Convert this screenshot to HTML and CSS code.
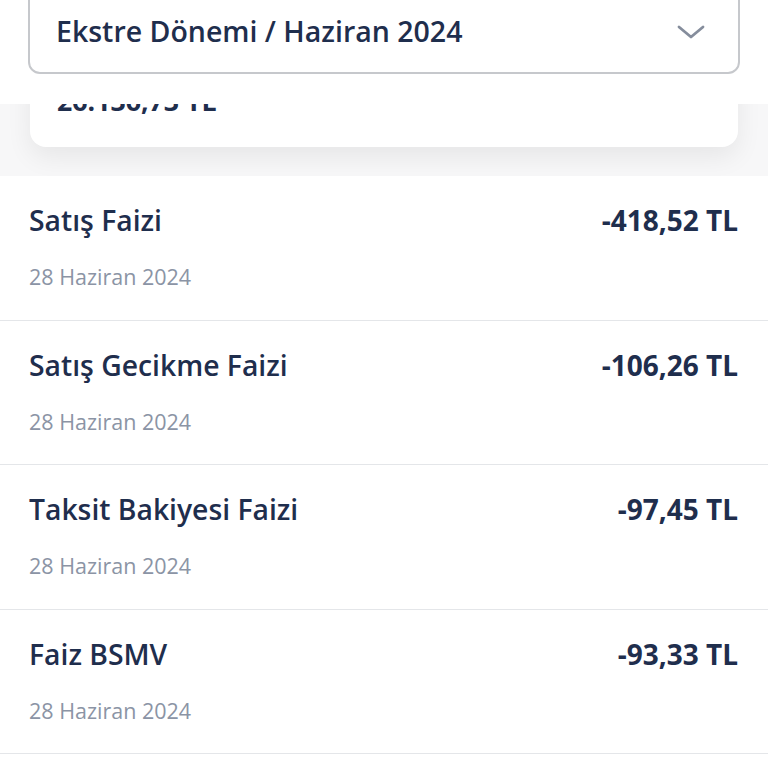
FILE: index.html
```html
<!DOCTYPE html>
<html lang="tr">
<head>
<meta charset="utf-8">
<title>Ekstre</title>
<link rel="stylesheet" href="styles.css">
</head>
<body>
<div class="page">
  <header class="header">
    <div class="select">
      <span class="select-label">Ekstre Dönemi / Haziran 2024</span>
      <svg class="chevron" width="28" height="14" viewBox="0 0 28 14" aria-hidden="true">
        <path d="M2 2 L14 12 L26 2" fill="none" stroke="#858d9c" stroke-width="2.8" stroke-linecap="round" stroke-linejoin="round"/>
      </svg>
    </div>
  </header>
  <section class="summary">
    <div class="summary-card">
      <div class="summary-amount">26.136,73 TL</div>
    </div>
  </section>
  <ul class="list">
    <li class="row">
      <div class="row-main">
        <span class="row-title">Satış Faizi</span>
        <span class="row-amount">-418,52 TL</span>
      </div>
      <div class="row-date">28 Haziran 2024</div>
    </li>
    <li class="row">
      <div class="row-main">
        <span class="row-title">Satış Gecikme Faizi</span>
        <span class="row-amount">-106,26 TL</span>
      </div>
      <div class="row-date">28 Haziran 2024</div>
    </li>
    <li class="row">
      <div class="row-main">
        <span class="row-title">Taksit Bakiyesi Faizi</span>
        <span class="row-amount">-97,45 TL</span>
      </div>
      <div class="row-date">28 Haziran 2024</div>
    </li>
    <li class="row">
      <div class="row-main">
        <span class="row-title">Faiz BSMV</span>
        <span class="row-amount">-93,33 TL</span>
      </div>
      <div class="row-date">28 Haziran 2024</div>
    </li>
  </ul>
</div>
</body>
</html>
```
FILE: styles.css
```css
* { box-sizing: border-box; }
html, body {
  margin: 0;
  padding: 0;
  background: #ffffff;
}
body {
  font-family: "Open Sans", "Noto Sans", sans-serif;
  color: #1f2e4d;
  overflow: hidden;
}
.page {
  width: 768px;
  display: flex;
  flex-direction: column;
}
.header {
  height: 104px;
  background: #ffffff;
  padding: 0 28px;
  position: relative;
  z-index: 2;
}
.select {
  margin-top: -12px;
  height: 86px;
  border: 2.5px solid #c6c8cc;
  border-radius: 12px;
  display: flex;
  align-items: center;
  justify-content: space-between;
  padding: 0 33px 0 26px;
}
.select-label {
  font-size: 28.5px;
  font-weight: 600;
  line-height: 36px;
  color: #1f2e4d;
}
.chevron { display: block; margin-top: 1px; }
.summary {
  height: 72px;
  overflow: hidden;
  background: #f7f7f8;
}
.summary-card {
  margin: -42px 30px 0;
  height: 85px;
  background: #ffffff;
  border-radius: 16px;
  box-shadow: 0 10px 26px rgba(0, 0, 0, 0.07);
  padding: 21px 27px 0;
}
.summary-amount {
  font-size: 26.7px;
  line-height: 36px;
  font-weight: 700;
  color: #1f2e4d;
}
.list {
  list-style: none;
  margin: 0;
  padding: 0;
  background: #ffffff;
}
.row {
  height: 144.5px;
  padding: 26px 30px 0 29px;
  border-bottom: 1.5px solid #e4e6e9;
}
.row-main {
  display: flex;
  justify-content: space-between;
  align-items: center;
  height: 36px;
}
.row-title {
  font-size: 28.3px;
  font-weight: 600;
  line-height: 36px;
  color: #1f2e4d;
}
.row-amount {
  font-size: 28px;
  font-weight: 700;
  line-height: 36px;
  color: #1f2e4d;
}
.row-date {
  margin-top: 25px;
  font-size: 21.5px;
  line-height: 28px;
  font-weight: 500;
  color: #8b94a5;
}
```
